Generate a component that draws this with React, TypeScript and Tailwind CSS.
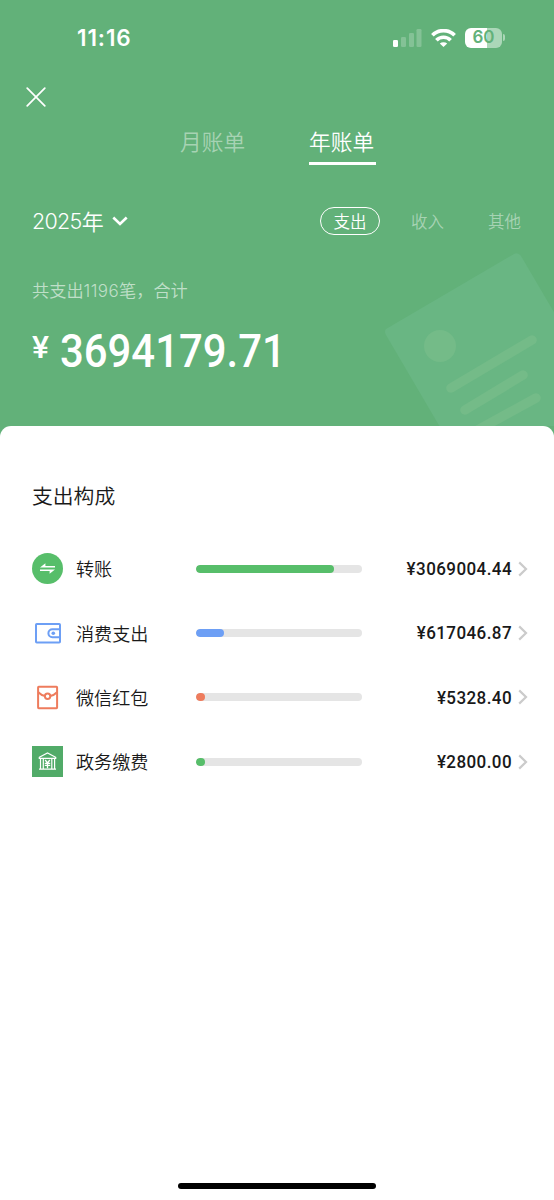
import React from 'react';

type Category = {
  name: string;
  amount: string;
  share: number;
  color: string;
  icon: React.ReactNode;
};

const TransferIcon = () => (
  <svg width="31" height="31" viewBox="0 0 31 31" fill="#fff">
    <circle cx="15.5" cy="15.5" r="15.5" fill="#57BE6A" />
    <path d="M23 12.9V14.6H8L13.4 10.2V12.9Z" />
    <path d="M8 18.1V16.4H23L17.6 20.8V18.1Z" />
  </svg>
);

const WalletIcon = () => (
  <svg width="31" height="31" viewBox="0 0 31 31" fill="none" stroke="#6D9FF5" strokeWidth="2">
    <rect x="4" y="6" width="24" height="18.6" rx="0.8" />
    <path d="M28 11.2H20.4a4 4 0 0 0 0 8H28" />
    <circle cx="21.3" cy="15.2" r="1.8" fill="#6D9FF5" stroke="none" />
  </svg>
);

const RedPacketIcon = () => (
  <svg width="31" height="31" viewBox="0 0 31 31" fill="none" stroke="#EE7C5D" strokeWidth="2">
    <rect x="6.1" y="4.8" width="19" height="21.4" rx="0.6" />
    <path d="M6.3 10.2Q9.5 13.4 13 14.1M18.2 14.1Q21.8 13.4 25 10.2" />
    <circle cx="15.6" cy="14.2" r="2.7" />
  </svg>
);

const GovernmentIcon = () => (
  <svg width="31" height="31" viewBox="0 0 31 31" fill="none" stroke="#fff" strokeWidth="1.2">
    <rect width="31" height="31" fill="#51AB68" stroke="none" />
    <path d="M7.3 11.3L15.5 6.9L23.7 11.3V12.3H7.3Z" />
    <path d="M8.5 12.5V22.5M11.3 12.5V22.5M19.8 12.5V22.5M22.6 12.5V22.5M7 23.2H24" />
    <path d="M13.2 14L15.5 17L17.8 14M12.8 17.3H18.2M12.8 19.4H18.2M15.5 17V22.3" strokeWidth="1.3" />
  </svg>
);

const categories: Category[] = [
  { name: '转账', amount: '¥3069004.44', share: 83.1, color: '#57BE6A', icon: <TransferIcon /> },
  { name: '消费支出', amount: '¥617046.87', share: 16.8, color: '#6D9FF5', icon: <WalletIcon /> },
  { name: '微信红包', amount: '¥5328.40', share: 5.4, color: '#EE7C5D', icon: <RedPacketIcon /> },
  { name: '政务缴费', amount: '¥2800.00', share: 5.4, color: '#57BE6A', icon: <GovernmentIcon /> },
];

const StatusBar = () => (
  <div className="flex h-[75px] items-center justify-between pl-[77px] pr-[49px]">
    <span className="pt-[2px] font-['Inter',sans-serif] text-[22.5px] font-semibold leading-none tracking-[0.9px]">11:16</span>
    <div className="flex items-center">
      <svg width="29" height="18" viewBox="0 0 29 18" fill="#fff">
        <rect x="0" y="11" width="5" height="7" rx="1.3" />
        <rect x="8" y="8" width="5" height="10" rx="1.3" opacity="0.22" />
        <rect x="16" y="4" width="5" height="14" rx="1.3" opacity="0.22" />
        <rect x="23.5" y="0" width="5" height="18" rx="1.3" opacity="0.22" />
      </svg>
      <svg className="ml-[9px]" width="25" height="18" viewBox="0 0 25 18" fill="none" stroke="#fff" strokeWidth="3.7">
        <path d="M1.4 6.2a15.8 15.8 0 0 1 22.2 0" />
        <path d="M5.4 11.2a10 10 0 0 1 14.2 0" />
        <path d="M12.5 18L8.8 14.6a5.4 5.4 0 0 1 7.4 0Z" fill="#fff" stroke="none" />
      </svg>
      <div className="ml-[9px] flex h-5 w-[37px] items-center justify-center rounded-[6px] bg-[linear-gradient(90deg,#fff_60%,#abd7b8_60%)]">
        <span className="font-['Inter',sans-serif] text-[17px] font-semibold leading-none text-[#62B179]">60</span>
      </div>
      <div className="ml-px h-[7px] w-[2px] rounded-r-full bg-[#abd7b8]" />
    </div>
  </div>
);

const BillWatermark = () => (
  <svg className="absolute bottom-0 right-0" width="174" height="176" viewBox="380 250 174 176">
    <path d="M386 329L514 254Q518 252 521 256L610 408L474 485L386 335Q384 331 386 329Z" fill="#69B683" />
    <g fill="#74BB88" stroke="#74BB88" strokeLinecap="round">
      <circle cx="440" cy="346" r="16" stroke="none" />
      <path d="M451 388L532 340M465 410L523 375M474 432L536 398" strokeWidth="9.5" />
    </g>
  </svg>
);

const CategoryRow = ({ item }: { item: Category }) => (
  <div className="flex h-[64.4px] items-center">
    <div className="w-11 shrink-0">{item.icon}</div>
    <span className="w-[120px] shrink-0 pb-px text-[18.1px] font-[350] leading-none text-[#191919]">{item.name}</span>
    <div className="h-2 w-[166px] shrink-0 overflow-hidden rounded-full bg-[#E5E5E5]">
      <div className="h-full rounded-full" style={{ width: `${item.share}%`, backgroundColor: item.color }} />
    </div>
    <span className="flex-1 origin-right scale-x-[0.92] pt-px text-right font-['Roboto',sans-serif] text-[18.5px] font-medium leading-none tracking-[0.45px] text-[#191919]">
      {item.amount}
    </span>
    <svg className="ml-[6px]" width="10" height="16" viewBox="0 0 10 16" fill="none" stroke="#CBCBCB" strokeWidth="2.2">
      <path d="M1.2 1.4L8 8L1.2 14.6" />
    </svg>
  </div>
);

const App: React.FC = () => {
  return (
    <div className="flex h-[1200px] w-[554px] flex-col overflow-hidden bg-[#62B179] font-['Noto_Sans_CJK_SC',sans-serif] text-white">
      <header className="relative h-[426px] shrink-0">
        <BillWatermark />
        <StatusBar />

        <div className="flex h-[43px] items-center pl-[26px]">
          <svg width="20" height="20" viewBox="0 0 20 20" fill="none" stroke="#fff" strokeWidth="1.7" strokeLinecap="round">
            <path d="M1.2 1.2L18.8 18.8M18.8 1.2L1.2 18.8" />
          </svg>
        </div>

        <nav className="flex h-[46.5px] items-start pl-[180px] text-[21.7px] font-[350] leading-[45px]">
          <span className="w-[129px] text-white/45">月账单</span>
          <span className="h-[46.5px] w-[67px] border-b-[3px] border-white">年账单</span>
        </nav>

        {/* Year picker and bill type filter */}
        <div className="mt-[41.5px] flex h-[30px] items-center pl-8 leading-none">
          <span className="pt-px font-['Inter',sans-serif] text-[21.5px] font-[350] tracking-[-0.7px]">2025</span>
          <span className="pb-[2px] text-[22px] font-[350]">年</span>
          <svg className="ml-[8px]" width="16" height="10" viewBox="0 0 16 10" fill="none" stroke="#fff" strokeWidth="2.6">
            <path d="M1.3 1.5L8 8L14.7 1.5" />
          </svg>
          <div className="ml-auto flex items-center pr-[33px] text-[16.5px] font-[350]">
            <span className="flex h-7 w-[60px] items-center justify-center rounded-full border-[1.5px] border-white">支出</span>
            <span className="ml-[31px] text-white/45">收入</span>
            <span className="ml-[44px] text-white/45">其他</span>
          </div>
        </div>

        <div className="mt-[40px] flex h-[30px] items-center pl-8 text-[17.2px] font-[350] leading-none text-white/60">
          <span className="pb-[2px]">共支出</span>
          <span className="font-['Inter',sans-serif] text-[17px] tracking-[0.4px]">1196</span>
          <span className="pb-[2px]">笔，合计</span>
        </div>

        <div className="mt-[22px] flex h-[46px] items-center pl-8 font-['Roboto',sans-serif] font-medium leading-none">
          <span className="w-[28px] pb-[9px] text-[32px]">¥</span>
          <span className="origin-left scale-x-[0.9] text-[46.5px]">3694179.71</span>
        </div>
      </header>

      <main className="relative flex flex-1 flex-col rounded-t-[11px] bg-white px-8 pr-[26px] pt-[54px]">
        <h2 className="h-[30px] text-[20.8px] font-[350] leading-[30px] text-[#191919]">支出构成</h2>
        <div className="mt-[26.5px] flex flex-col">
          {categories.map((item) => (
            <CategoryRow key={item.name} item={item} />
          ))}
        </div>
        <div className="mb-[11px] ml-[146px] mt-auto h-[6px] w-[198px] rounded-full bg-black" />
      </main>
    </div>
  );
};

export default App;
